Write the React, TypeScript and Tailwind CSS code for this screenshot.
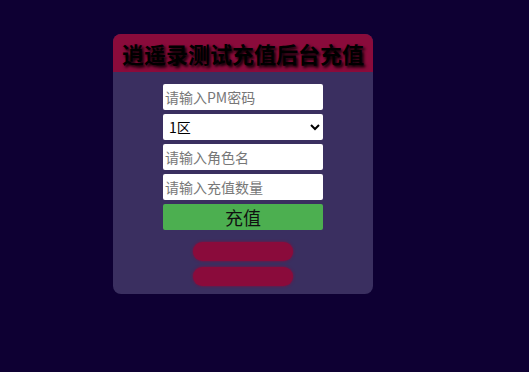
import React from "react";

const font = { fontFamily: '"Noto Sans CJK SC", "Liberation Sans", sans-serif' };

export default function App() {
  return (
    <div className="w-[529px] h-[372px] bg-[#0e0033] pt-[34px] pl-[113px]" style={font}>
      <div className="w-[260px] h-[260px] bg-[#3a2f60] rounded-[8px] overflow-hidden flex flex-col items-center">
        <div className="w-full h-[38px] bg-[#8a0b3b] flex items-center justify-center">
          <h1 className="text-[22px] font-bold text-black leading-none [text-shadow:2px_2px_3px_#000]">
            逍遥录测试充值后台充值
          </h1>
        </div>
        <div className="mt-[12px] flex flex-col gap-[4px] w-[160px]">
          <input
            className="h-[26px] bg-white rounded-[2px] px-[2px] text-[14px] text-black placeholder:text-[#777] outline-none"
            placeholder="请输入PM密码"
          />
          <select className="h-[26px] bg-white rounded-[2px] px-[2px] text-[14px] text-black outline-none">
            <option>1区</option>
          </select>
          <input
            className="h-[26px] bg-white rounded-[2px] px-[2px] text-[14px] text-black placeholder:text-[#777] outline-none"
            placeholder="请输入角色名"
          />
          <input
            className="h-[26px] bg-white rounded-[2px] px-[2px] text-[14px] text-black placeholder:text-[#777] outline-none"
            placeholder="请输入充值数量"
          />
          <button className="h-[26px] bg-[#4caf50] rounded-[2px] text-[18px] leading-none text-[#111]">
            充值
          </button>
        </div>
        <div className="mt-[12px] flex flex-col gap-[6px]">
          <div className="w-[100px] h-[19px] rounded-full bg-[#8a0b3b] shadow-[0_0_3px_#8a0b3b]" />
          <div className="w-[100px] h-[19px] rounded-full bg-[#8a0b3b] shadow-[0_0_3px_#8a0b3b]" />
        </div>
      </div>
    </div>
  );
}
